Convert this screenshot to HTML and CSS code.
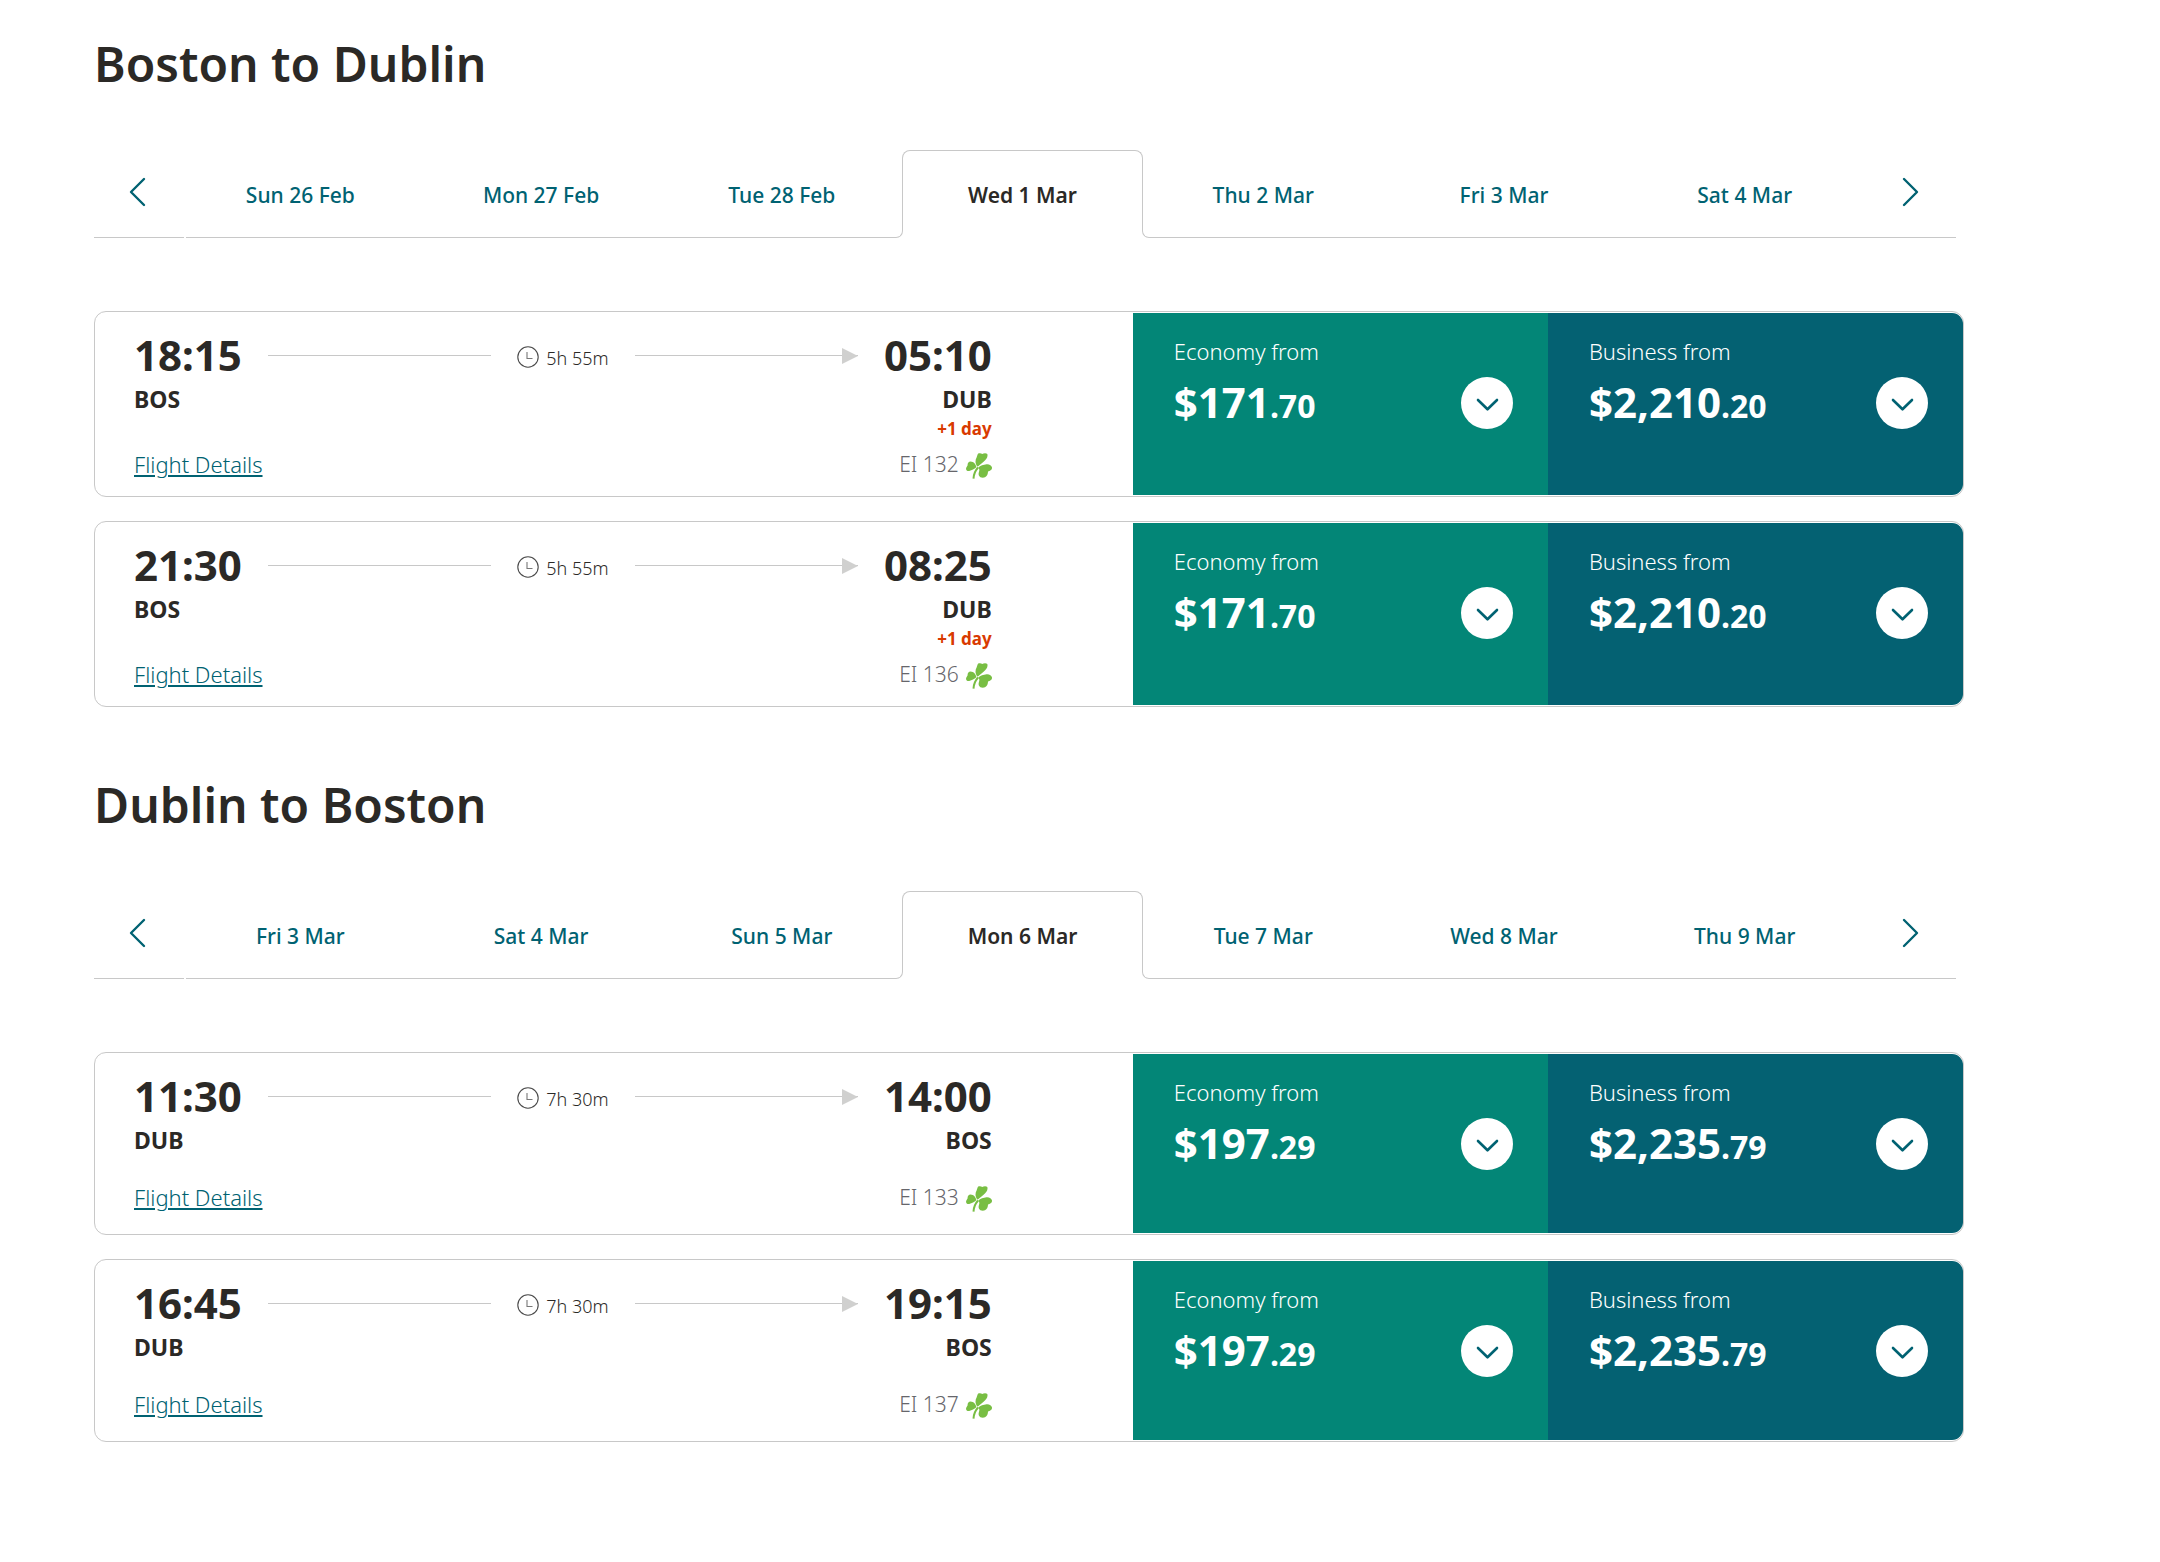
FILE: index.html
```html
<!DOCTYPE html>
<html lang="en">
<head>
<meta charset="utf-8">
<meta name="viewport" content="width=device-width, initial-scale=1">
<title>Select flights</title>
<link rel="stylesheet" href="styles.css">
</head>
<body>
<svg class="sprite" aria-hidden="true">
  <symbol id="chevron-left" viewBox="0 0 18 30"><path d="M16 2 3 15l13 13" fill="none" stroke="currentColor" stroke-width="2.4" stroke-linecap="round" stroke-linejoin="round"/></symbol>
  <symbol id="chevron-right" viewBox="0 0 18 30"><path d="M2 2l13 13L2 28" fill="none" stroke="currentColor" stroke-width="2.4" stroke-linecap="round" stroke-linejoin="round"/></symbol>
  <symbol id="chevron-down" viewBox="0 0 24 14"><path d="M3 2l9.500 9.300L22 2" fill="none" stroke="currentColor" stroke-width="2.6" stroke-linecap="round" stroke-linejoin="round"/></symbol>
  <symbol id="clock" viewBox="0 0 22 22"><circle cx="11" cy="11" r="10.2" fill="none" stroke="#4a4a4a" stroke-width="1.1"/><path d="M10 6v6.500h5.500" fill="none" stroke="#777" stroke-width="1.1"/></symbol>
  <symbol id="shamrock" viewBox="0 0 26 26"><path fill="#78be43" d="M11 13.200C9 10 9.200 7 10.600 4.600C11.300 3 11.400 1.400 12.200.6C13.700-.2 15.300.2 16.200 1.100C17.600-.1 20.400-.2 21.300 1C22.200 4.200 20.300 6.600 17.600 8.800C15.600 10.500 13.500 12 11.800 13.400ZM10.300 14.300C8.300 15.900 6 17.300 3.200 18C1.100 18.300-.2 16.800.1 15.200C.3 14 1.200 13.200 1.600 12.200C1.400 10 2.600 8.500 4.500 8.500C8 8.600 9.600 11 10.400 14ZM12.200 14.500C14.500 12.700 17.300 11.600 20.600 11.200C23.400 11 25.600 12.400 26 14.500C26.300 16.600 24.300 18 22 18.500C22 21 21 23.200 19 24.300C16.600 25.300 13.600 24.500 12.800 22.200C12.100 20 13.600 18.300 13.300 16.500Z"/><path d="M12 14.500C9.500 17.400 7.700 20.500 7.500 25.600" fill="none" stroke="#78be43" stroke-width="2"/></symbol>
</svg>

<main class="page">
  <section class="route" aria-labelledby="route-out">
    <h1 class="route-title" id="route-out">Boston to Dublin</h1>
    <div class="dates">
      <button class="date-nav" type="button" aria-label="Earlier dates"><svg class="nav-icon"><use href="#chevron-left"/></svg></button>
      <div class="date-tabs" role="tablist">
        <button class="date" type="button" role="tab">Sun 26 Feb</button>
        <button class="date" type="button" role="tab">Mon 27 Feb</button>
        <button class="date date-before" type="button" role="tab">Tue 28 Feb</button>
        <button class="date date-active" type="button" role="tab" aria-selected="true">Wed 1 Mar</button>
        <button class="date date-after" type="button" role="tab">Thu 2 Mar</button>
        <button class="date" type="button" role="tab">Fri 3 Mar</button>
        <button class="date" type="button" role="tab">Sat 4 Mar</button>
      </div>
      <button class="date-nav" type="button" aria-label="Later dates"><svg class="nav-icon"><use href="#chevron-right"/></svg></button>
    </div>
    <div class="flights">
      <article class="flight">
        <div class="trip">
          <div class="times">
            <span class="time">18:15</span><span class="line"></span>
            <span class="duration"><svg class="clock"><use href="#clock"/></svg>5h 55m</span>
            <span class="line line-arrow"></span><span class="time">05:10</span>
          </div>
          <div class="airports"><span>BOS</span><span>DUB</span></div>
          <div class="next-day">+1 day</div>
          <div class="info"><a class="details" href="#details-132">Flight Details</a><span class="number">EI 132<svg class="shamrock"><use href="#shamrock"/></svg></span></div>
        </div>
        <div class="fare economy">
          <div><div class="fare-label">Economy from</div><div class="price">$171<span class="cents">.70</span></div></div>
          <button class="expand" type="button" aria-label="Show economy fares"><svg class="expand-icon"><use href="#chevron-down"/></svg></button>
        </div>
        <div class="fare business">
          <div><div class="fare-label">Business from</div><div class="price">$2,210<span class="cents">.20</span></div></div>
          <button class="expand" type="button" aria-label="Show business fares"><svg class="expand-icon"><use href="#chevron-down"/></svg></button>
        </div>
      </article>
      <article class="flight">
        <div class="trip">
          <div class="times">
            <span class="time">21:30</span><span class="line"></span>
            <span class="duration"><svg class="clock"><use href="#clock"/></svg>5h 55m</span>
            <span class="line line-arrow"></span><span class="time">08:25</span>
          </div>
          <div class="airports"><span>BOS</span><span>DUB</span></div>
          <div class="next-day">+1 day</div>
          <div class="info"><a class="details" href="#details-136">Flight Details</a><span class="number">EI 136<svg class="shamrock"><use href="#shamrock"/></svg></span></div>
        </div>
        <div class="fare economy">
          <div><div class="fare-label">Economy from</div><div class="price">$171<span class="cents">.70</span></div></div>
          <button class="expand" type="button" aria-label="Show economy fares"><svg class="expand-icon"><use href="#chevron-down"/></svg></button>
        </div>
        <div class="fare business">
          <div><div class="fare-label">Business from</div><div class="price">$2,210<span class="cents">.20</span></div></div>
          <button class="expand" type="button" aria-label="Show business fares"><svg class="expand-icon"><use href="#chevron-down"/></svg></button>
        </div>
      </article>
    </div>
  </section>

  <section class="route" aria-labelledby="route-back">
    <h1 class="route-title" id="route-back">Dublin to Boston</h1>
    <div class="dates">
      <button class="date-nav" type="button" aria-label="Earlier dates"><svg class="nav-icon"><use href="#chevron-left"/></svg></button>
      <div class="date-tabs" role="tablist">
        <button class="date" type="button" role="tab">Fri 3 Mar</button>
        <button class="date" type="button" role="tab">Sat 4 Mar</button>
        <button class="date date-before" type="button" role="tab">Sun 5 Mar</button>
        <button class="date date-active" type="button" role="tab" aria-selected="true">Mon 6 Mar</button>
        <button class="date date-after" type="button" role="tab">Tue 7 Mar</button>
        <button class="date" type="button" role="tab">Wed 8 Mar</button>
        <button class="date" type="button" role="tab">Thu 9 Mar</button>
      </div>
      <button class="date-nav" type="button" aria-label="Later dates"><svg class="nav-icon"><use href="#chevron-right"/></svg></button>
    </div>
    <div class="flights">
      <article class="flight">
        <div class="trip">
          <div class="times">
            <span class="time">11:30</span><span class="line"></span>
            <span class="duration"><svg class="clock"><use href="#clock"/></svg>7h 30m</span>
            <span class="line line-arrow"></span><span class="time">14:00</span>
          </div>
          <div class="airports"><span>DUB</span><span>BOS</span></div>
          <div class="info info-same-day"><a class="details" href="#details-133">Flight Details</a><span class="number">EI 133<svg class="shamrock"><use href="#shamrock"/></svg></span></div>
        </div>
        <div class="fare economy">
          <div><div class="fare-label">Economy from</div><div class="price">$197<span class="cents">.29</span></div></div>
          <button class="expand" type="button" aria-label="Show economy fares"><svg class="expand-icon"><use href="#chevron-down"/></svg></button>
        </div>
        <div class="fare business">
          <div><div class="fare-label">Business from</div><div class="price">$2,235<span class="cents">.79</span></div></div>
          <button class="expand" type="button" aria-label="Show business fares"><svg class="expand-icon"><use href="#chevron-down"/></svg></button>
        </div>
      </article>
      <article class="flight">
        <div class="trip">
          <div class="times">
            <span class="time">16:45</span><span class="line"></span>
            <span class="duration"><svg class="clock"><use href="#clock"/></svg>7h 30m</span>
            <span class="line line-arrow"></span><span class="time">19:15</span>
          </div>
          <div class="airports"><span>DUB</span><span>BOS</span></div>
          <div class="info info-same-day"><a class="details" href="#details-137">Flight Details</a><span class="number">EI 137<svg class="shamrock"><use href="#shamrock"/></svg></span></div>
        </div>
        <div class="fare economy">
          <div><div class="fare-label">Economy from</div><div class="price">$197<span class="cents">.29</span></div></div>
          <button class="expand" type="button" aria-label="Show economy fares"><svg class="expand-icon"><use href="#chevron-down"/></svg></button>
        </div>
        <div class="fare business">
          <div><div class="fare-label">Business from</div><div class="price">$2,235<span class="cents">.79</span></div></div>
          <button class="expand" type="button" aria-label="Show business fares"><svg class="expand-icon"><use href="#chevron-down"/></svg></button>
        </div>
      </article>
    </div>
  </section>
</main>
</body>
</html>
```
FILE: styles.css
```css
:root {
  --ink: #2b2926;
  --teal: #006272;
  --green: #038677;
  --rule: #c8c8c8;
}

* { box-sizing: border-box; }

body {
  margin: 0;
  background: #fff;
  color: var(--ink);
  font-family: "Noto Sans", "Open Sans", sans-serif;
  font-size: 22px;
  line-height: 30px;
}

button {
  font: inherit;
  padding: 0;
  border: 0;
  background: none;
  cursor: pointer;
}

.sprite { display: none; }

.page { padding: 34px 196px 64px 94px; }

.route + .route { margin-top: 68px; }

.route-title {
  margin: 0 0 56px;
  font-size: 48px;
  line-height: 60px;
  font-weight: 600;
}

/* Date strip */
.dates {
  display: grid;
  grid-template-columns: 86px 1fr 91px;
  height: 88px;
  margin: 0 8px 73px 0;
}

.date-nav {
  display: flex;
  align-items: center;
  justify-content: center;
  padding-bottom: 4px;
  border-bottom: 1px solid var(--rule);
  color: var(--teal);
}

.nav-icon { width: 18px; height: 30px; }

.date-tabs { display: flex; }

.date {
  position: relative;
  flex: 1;
  padding-top: 2px;
  border-bottom: 1px solid var(--rule);
  color: var(--teal);
  font-size: 21px;
  font-weight: 500;
}

.date:first-child::before {
  content: "";
  position: absolute;
  left: 4px;
  bottom: -1px;
  width: 2px;
  height: 1px;
  background: #fff;
}

.date-active {
  border-bottom-color: transparent;
  color: var(--ink);
  font-weight: 600;
}

.date-active::before {
  content: "";
  position: absolute;
  inset: 0 0 7px;
  border: 1px solid var(--rule);
  border-bottom: 0;
  border-radius: 8px 8px 0 0;
}

/* The strip's rule curls up into the sides of the selected tab */
.date-before,
.date-after { border-bottom-color: transparent; }

.date-before::after,
.date-after::after {
  content: "";
  position: absolute;
  bottom: -1px;
  height: 8px;
  border-bottom: 1px solid var(--rule);
}

.date-before::after {
  left: 0;
  right: -1px;
  border-right: 1px solid var(--rule);
  border-bottom-right-radius: 7px;
}

.date-after::after {
  left: -1px;
  right: 0;
  border-left: 1px solid var(--rule);
  border-bottom-left-radius: 7px;
}

/* Flight cards */
.flights {
  display: grid;
  gap: 24px;
}

.flight {
  display: grid;
  grid-template-columns: 5fr 2fr 2fr;
  min-height: 183px;
  padding: 1px 0;
  border: 1px solid var(--rule);
  border-radius: 12px;
}

.trip { padding: 18px 141px 16px 39px; }

.times {
  display: flex;
  align-items: center;
  gap: 26px;
}

.time {
  font-size: 42px;
  line-height: 48px;
  font-weight: 700;
}

.line {
  flex: 1;
  height: 1px;
  background: var(--rule);
}

.line-arrow { position: relative; }

.line-arrow::after {
  content: "";
  position: absolute;
  right: 0;
  top: -7px;
  border: 8px solid transparent;
  border-left: 16px solid #d0d0cf;
  border-right: 0;
}

.duration {
  display: flex;
  align-items: center;
  gap: 7px;
  padding-top: 5px;
  font-size: 18px;
  line-height: 24px;
  font-weight: 300;
}

.clock { width: 22px; height: 22px; margin-bottom: 2px; }

.airports {
  display: flex;
  justify-content: space-between;
  margin-top: 4px;
  font-size: 23px;
  line-height: 32px;
  font-weight: 700;
}

.next-day {
  margin-top: 2px;
  color: #d93a00;
  font-size: 17px;
  line-height: 24px;
  font-weight: 700;
  text-align: right;
}

.info {
  display: flex;
  justify-content: space-between;
  margin-top: 8px;
  font-weight: 300;
}

.info-same-day { margin-top: 26px; }

.details {
  color: var(--teal);
  text-decoration-thickness: 2px;
  text-underline-offset: 2px;
}

.number {
  display: flex;
  align-items: center;
  gap: 7px;
  color: #66666b;
  font-size: 21px;
}

.shamrock { width: 26px; height: 26px; margin-top: 3px; }

.fare {
  display: flex;
  justify-content: space-between;
  align-items: flex-start;
  padding: 23px 35px 16px 41px;
  color: #fff;
}

.economy { background: var(--green); }

.business {
  background: #046172;
  border-radius: 0 11px 11px 0;
}

.fare-label { font-weight: 300; }

.price {
  margin-top: 8px;
  font-size: 42px;
  line-height: 56px;
  font-weight: 700;
}

.cents { font-size: 32px; }

.expand {
  display: flex;
  align-items: center;
  justify-content: center;
  width: 52px;
  height: 52px;
  margin-top: 41px;
  border-radius: 50%;
  background: #fff;
  color: var(--teal);
}

.expand-icon { width: 24px; height: 14px; margin-top: 3px; }
```
